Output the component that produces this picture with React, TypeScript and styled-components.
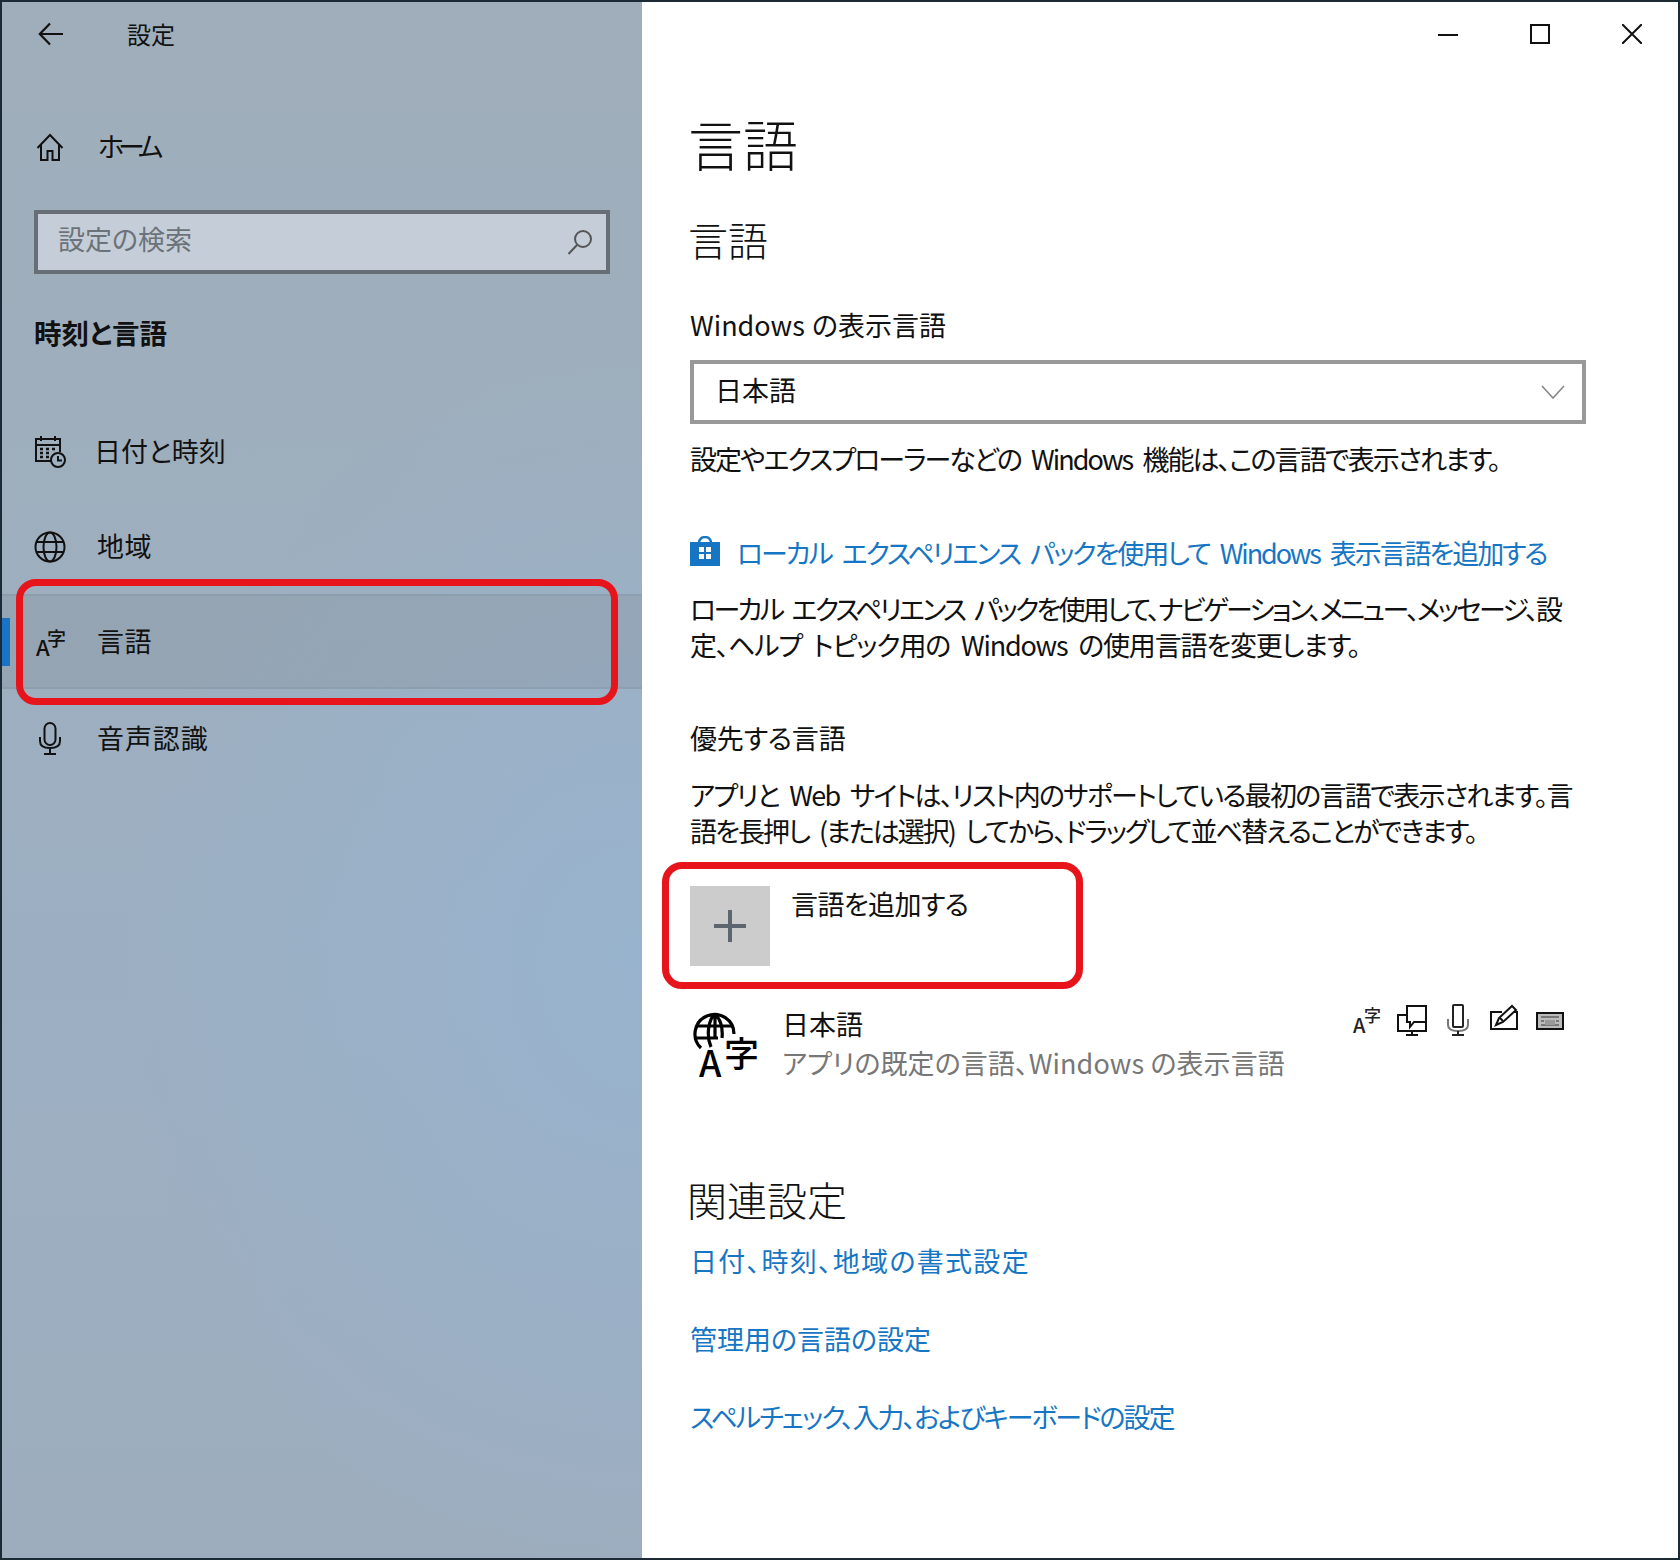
import styled, { createGlobalStyle } from "styled-components";

const GlobalStyle = createGlobalStyle`
  html, body {
    margin: 0;
    padding: 0;
    background: #fff;
  }
  * {
    box-sizing: border-box;
  }
`;

const Window = styled.div`
  width: 1680px;
  height: 1560px;
  border: 2px solid #1c2a36;
  display: flex;
  font-family: "Noto Sans CJK JP", "Noto Sans", sans-serif;
  font-size: 27px;
  line-height: 36px;
  color: #111;
  overflow: hidden;
`;

const Sidebar = styled.aside`
  width: 640px;
  flex-shrink: 0;
  display: flex;
  flex-direction: column;
  background:
    radial-gradient(ellipse 520px 620px at 100% 62%, rgba(150, 182, 214, 0.6), rgba(150, 182, 214, 0) 100%),
    linear-gradient(180deg, #a0aebb 0%, #9eaebc 25%, #9cafc2 60%, #9dadbe 100%);
`;

const TitleBar = styled.div`
  height: 64px;
  display: flex;
  align-items: center;
  padding-left: 36px;
  gap: 63px;
  font-size: 24px;
  font-feature-settings: "palt";
`;

const NavRow = styled.div<{ $active?: boolean }>`
  position: relative;
  height: 95px;
  display: flex;
  align-items: center;
  gap: 31px;
  padding-left: 32px;
  background: ${(p) => (p.$active ? "rgba(100, 100, 100, 0.13)" : "transparent")};
  box-shadow: ${(p) =>
    p.$active ? "inset 0 2px 0 rgba(90,100,105,.1), inset 0 -2px 0 rgba(90,100,105,.1)" : "none"};
`;

const HomeRow = styled(NavRow)`
  margin-top: 33px;
`;

const SpeechRow = styled(NavRow)`
  margin-top: 2px;
`;

const NavLabel = styled.span<{ $ls?: number; $nudge?: number }>`
  padding-bottom: 2px;
  margin-left: ${(p) => p.$nudge ?? 0}px;
  font-feature-settings: "palt";
  letter-spacing: ${(p) => p.$ls ?? 0.4}px;
`;

const NavIcon = styled.span`
  width: 32px;
  height: 34px;
  display: flex;
  align-items: center;
  justify-content: center;
`;

const NavList = styled.nav`
  margin-top: 52px;
  display: flex;
  flex-direction: column;
`;

const ActiveBar = styled.span`
  position: absolute;
  left: 0;
  top: 24px;
  width: 8px;
  height: 48px;
  background: #1a74c6;
`;

const SearchBox = styled.div`
  margin: 16px 0 0 32px;
  width: 576px;
  height: 64px;
  border: 4px solid #676e76;
  background: #c5ced8;
  display: flex;
  align-items: center;
  justify-content: space-between;
  padding: 0 13px 0 20px;
  color: #6c7279;
`;

const SearchLabel = styled.span`
  padding-bottom: 7px;
  font-feature-settings: "palt";
`;

const SectionTitle = styled.h2`
  margin: 38px 0 0 32px;
  font-size: 27.5px;
  line-height: 40px;
  font-weight: 700;
  font-feature-settings: "palt";
`;

const Highlight = styled.div<{ $left: number; $top: number; $w: number; $h: number }>`
  position: absolute;
  left: ${(p) => p.$left}px;
  top: ${(p) => p.$top}px;
  width: ${(p) => p.$w}px;
  height: ${(p) => p.$h}px;
  border: 7.5px solid #e8141c;
  border-radius: 20px;
  pointer-events: none;
`;

const Main = styled.main`
  flex: 1;
  background: #fff;
  padding-left: 48px;
  display: flex;
  flex-direction: column;
  align-items: flex-start;
`;

const Controls = styled.div`
  align-self: stretch;
  height: 64px;
  margin-left: -48px;
  display: flex;
  align-items: center;
  justify-content: flex-end;
  gap: 72px;
  padding-right: 36px;
`;

const PageTitle = styled.h1`
  margin: 41px 0 0 -2px;
  font-size: 55px;
  line-height: 70px;
  font-weight: 300;
`;

const Subtitle = styled.h2<{ $top: number; $left?: number }>`
  margin: ${(p) => p.$top}px 0 0 ${(p) => p.$left ?? -2}px;
  font-size: 40px;
  line-height: 50px;
  font-weight: 300;
`;

const Text = styled.p<{ $top: number; $ls?: number; $ws?: number }>`
  margin: ${(p) => p.$top}px 0 0;
  width: 896px;
  font-feature-settings: "palt";
  letter-spacing: ${(p) => p.$ls ?? 0}px;
  word-spacing: ${(p) => p.$ws ?? 6}px;
  white-space: nowrap;
`;

const TextLine = styled.span<{ $ls: number }>`
  display: block;
  letter-spacing: ${(p) => p.$ls}px;
`;

const Select = styled.div`
  margin-top: 17px;
  width: 896px;
  height: 64px;
  border: 4px solid #999;
  display: flex;
  align-items: center;
  justify-content: space-between;
  padding: 0 17px 0 21px;
`;

const SelectValue = styled.span`
  padding-bottom: 4px;
`;

const StoreLink = styled.a`
  margin-top: 58px;
  display: flex;
  align-items: center;
  gap: 17px;
  color: #1776c3;
  font-feature-settings: "palt";
  letter-spacing: -2.1px;
  word-spacing: 6px;
  svg {
    margin-bottom: 5px;
  }
`;

const RelatedLink = styled.a<{ $top: number; $ls?: number }>`
  display: block;
  margin-top: ${(p) => p.$top}px;
  color: #1776c3;
  font-feature-settings: "palt";
  letter-spacing: ${(p) => p.$ls ?? 0}px;
`;

const AddRow = styled.div`
  position: relative;
  margin-top: 37px;
  display: flex;
  gap: 21px;
`;

const AddTile = styled.div`
  width: 80px;
  height: 80px;
  background: #ccc;
  display: flex;
  align-items: center;
  justify-content: center;
`;

const AddLabel = styled.span`
  font-feature-settings: "palt";
  letter-spacing: -0.6px;
`;

const LanguageRow = styled.div`
  margin-top: 40px;
  width: 896px;
  display: flex;
`;

const LanguageIcon = styled.div`
  width: 92px;
  flex-shrink: 0;
  padding: 6px 0 0 4px;
`;

const LanguageText = styled.div`
  flex: 1;
  display: flex;
  flex-direction: column;
  gap: 3px;
`;

const LanguageHint = styled.span`
  color: #777;
  font-feature-settings: "palt";
  letter-spacing: 0.1px;
`;

const FeatureIcons = styled.div`
  display: flex;
  gap: 14px;
  margin: -2px 20px 0 0;
  height: 32px;
`;

const BackIcon = () => (
  <svg width="26" height="24" viewBox="0 0 26 24" fill="none" stroke="#111" strokeWidth="2.2">
    <path d="M25 12H2M12 1.5 1.8 12 12 22.5" />
  </svg>
);

const HomeIcon = () => (
  <svg width="28" height="28" viewBox="0 0 28 28" fill="none" stroke="#111" strokeWidth="2">
    <path d="M1.5 15 14 2l12.5 13M5 12v15h6.5v-9h5v9H23V12" />
  </svg>
);

const SearchIcon = () => (
  <svg width="26" height="26" viewBox="0 0 26 26" fill="none" stroke="#555" strokeWidth="2">
    <circle cx="16" cy="10" r="8" />
    <path d="M10 16 1.5 25" />
  </svg>
);

const CalendarIcon = () => (
  <svg width="32" height="34" viewBox="0 0 32 34" fill="none" stroke="#111" strokeWidth="2">
    <path d="M19 26H2V4h24v13M2 10h24M7 1v5M21 1v5" />
    <path d="M6 14h3M12 14h3M18 14h3M6 18h3M12 18h3M6 22h3M12 22h3" strokeWidth="2.4" />
    <circle cx="24" cy="25" r="7" fill="#9fb1c3" />
    <path d="M24 21v4.5h4" />
  </svg>
);

const GlobeIcon = () => (
  <svg width="32" height="32" viewBox="0 0 32 32" fill="none" stroke="#111" strokeWidth="2">
    <circle cx="16" cy="16" r="14.5" />
    <ellipse cx="16" cy="16" rx="6.5" ry="14.5" />
    <path d="M2.5 11h27M2.5 21h27" />
  </svg>
);

const GlyphSvg = styled.svg`
  overflow: visible;
  font-family: "Noto Sans CJK JP", sans-serif;
`;

const LanguageGlyph = () => (
  <GlyphSvg width="32" height="34" viewBox="0 0 32 34" fill="#111">
    <text x="2" y="31" fontSize="22" fontWeight="500">A</text>
    <text x="13" y="21" fontSize="19" fontWeight="500">字</text>
  </GlyphSvg>
);

const MicIcon = () => (
  <svg width="24" height="33" viewBox="0 0 24 33" fill="none" stroke="#111" strokeWidth="2">
    <rect x="6.5" y="1" width="11" height="22" rx="5.5" />
    <path d="M2 15v4c0 5 4 7 10 7s10-2 10-7v-4M12 26v6M6 32h12" />
  </svg>
);

const StoreIcon = () => (
  <svg width="30" height="30" viewBox="0 0 30 30">
    <path d="M9 7c0-8 12-8 12 0" fill="none" stroke="#1776c3" strokeWidth="2.4" />
    <rect y="6" width="30" height="24" fill="#1776c3" />
    <path d="M9 11h5v5H9zM16 11h5v5h-5zM9 18h5v5H9zM16 18h5v5h-5z" fill="#fff" />
  </svg>
);

const MinimizeIcon = () => (
  <svg width="20" height="20" viewBox="0 0 20 20" stroke="#111" strokeWidth="2">
    <path d="M0 11h20" />
  </svg>
);

const MaximizeIcon = () => (
  <svg width="20" height="20" viewBox="0 0 20 20" fill="none" stroke="#111" strokeWidth="2">
    <rect x="1" y="1" width="18" height="18" />
  </svg>
);

const CloseIcon = () => (
  <svg width="20" height="20" viewBox="0 0 20 20" stroke="#111" strokeWidth="2">
    <path d="m0 0 20 20M20 0 0 20" />
  </svg>
);

const ChevronIcon = () => (
  <svg width="24" height="14" viewBox="0 0 24 14" fill="none" stroke="#888" strokeWidth="1.6">
    <path d="M1 1 12 13 23 1" />
  </svg>
);

const PlusIcon = () => (
  <svg width="32" height="32" viewBox="0 0 32 32" stroke="#5d666e" strokeWidth="4">
    <path d="M0 16h32M16 0v32" />
  </svg>
);

const BigLanguageIcon = () => (
  <GlyphSvg width="68" height="66" viewBox="0 0 68 66" fill="#000">
    <g fill="none" stroke="#000" strokeWidth="3.2">
      <path d="M7 36A19.5 19.5 0 1 1 40 22" />
      <path d="M20 2c-7 10-7 24-3 33M21 2c6 6 8 14 7 24M3 14h36M2 26h22M21 2v24" />
    </g>
    <text x="5" y="65" fontSize="36" fontWeight="500">A</text>
    <text x="30" y="55" fontSize="35" fontWeight="500">字</text>
  </GlyphSvg>
);

const FeatureLanguage = () => (
  <GlyphSvg width="32" height="32" viewBox="0 0 32 32" fill="#222">
    <text x="3" y="29" fontSize="20" fontWeight="500">A</text>
    <text x="14" y="18" fontSize="17" fontWeight="500">字</text>
  </GlyphSvg>
);

const FeatureDisplay = () => (
  <svg width="32" height="32" viewBox="0 0 32 32" fill="none" stroke="#111" strokeWidth="2">
    <path d="M11 11H2v16h28v-9M10 31h12M16 27v4" />
    <path d="M11 2h19v16H18l-4 5v-5h-3z" fill="#fff" />
  </svg>
);

const FeatureMic = () => (
  <svg width="32" height="32" viewBox="0 0 32 32" fill="none" stroke="#222" strokeWidth="2">
    <rect x="11" y="1" width="10" height="22" rx="1" />
    <path d="M6 15v6c0 4 4 6 10 6s10-2 10-6v-6" stroke="#777" />
    <path d="M16 27v3M10 31h12" />
  </svg>
);

const FeaturePen = () => (
  <svg width="32" height="32" viewBox="0 0 32 32" fill="none" stroke="#111" strokeWidth="2">
    <path d="M14 8H3v17h26V8h-3" />
    <path d="m8 21 3-7L24 2l4 4-13 12z" fill="#fff" />
    <path d="M12 14l3 3" />
  </svg>
);

const FeatureKeyboard = () => (
  <svg width="32" height="32" viewBox="0 0 32 32" fill="none">
    <rect x="3" y="9" width="26" height="16" stroke="#111" strokeWidth="2" fill="#bbb" />
    <path d="M7 13h18M7 17h3M22 17h3M7 21h18" stroke="#777" strokeWidth="2" />
    <path d="M11 16h10v5H11z" fill="#999" />
  </svg>
);

export default function App() {
  return (
    <>
      <GlobalStyle />
      <Window>
        <Sidebar>
          <TitleBar>
            <BackIcon />
            <span>設定</span>
          </TitleBar>
          <HomeRow>
            <NavIcon>
              <HomeIcon />
            </NavIcon>
            <NavLabel $ls={-6} $nudge={1}>ホーム</NavLabel>
          </HomeRow>
          <SearchBox>
            <SearchLabel>設定の検索</SearchLabel>
            <SearchIcon />
          </SearchBox>
          <SectionTitle>時刻と言語</SectionTitle>
          <NavList>
            <NavRow>
              <NavIcon>
                <CalendarIcon />
              </NavIcon>
              <NavLabel $ls={0} $nudge={-3}>日付と時刻</NavLabel>
            </NavRow>
            <NavRow>
              <NavIcon>
                <GlobeIcon />
              </NavIcon>
              <NavLabel>地域</NavLabel>
            </NavRow>
            <NavRow $active>
              <ActiveBar />
              <NavIcon>
                <LanguageGlyph />
              </NavIcon>
              <NavLabel>言語</NavLabel>
              <Highlight $left={14} $top={-15} $w={602} $h={126} />
            </NavRow>
            <SpeechRow>
              <NavIcon>
                <MicIcon />
              </NavIcon>
              <NavLabel $ls={0.9}>音声認識</NavLabel>
            </SpeechRow>
          </NavList>
        </Sidebar>
        <Main>
          <Controls>
            <MinimizeIcon />
            <MaximizeIcon />
            <CloseIcon />
          </Controls>
          <PageTitle>言語</PageTitle>
          <Subtitle $top={37}>言語</Subtitle>
          <Text $top={43} $ws={1}>Windows の表示言語</Text>
          <Select>
            <SelectValue>日本語</SelectValue>
            <ChevronIcon />
          </Select>
          <Text $top={17} $ls={-1.95}>
            設定やエクスプローラーなどの Windows 機能は、この言語で表示されます。
          </Text>
          <StoreLink>
            <StoreIcon />
            <span>ローカル エクスペリエンス パックを使用して Windows 表示言語を追加する</span>
          </StoreLink>
          <Text $top={20}>
            <TextLine $ls={-2.75}>
              ローカル エクスペリエンス パックを使用して、ナビゲーション、メニュー、メッセージ、設
            </TextLine>
            <TextLine $ls={-1.2}>定、ヘルプ トピック用の Windows の使用言語を変更します。</TextLine>
          </Text>
          <Text $top={57} $ls={-0.2}>優先する言語</Text>
          <Text $top={21}>
            <TextLine $ls={-1.73}>
              アプリと Web サイトは、リスト内のサポートしている最初の言語で表示されます。言
            </TextLine>
            <TextLine $ls={-1.98}>語を長押し (または選択) してから、ドラッグして並べ替えることができます。</TextLine>
          </Text>
          <AddRow>
            <AddTile>
              <PlusIcon />
            </AddTile>
            <AddLabel>言語を追加する</AddLabel>
            <Highlight $left={-28} $top={-24} $w={421} $h={127} />
          </AddRow>
          <LanguageRow>
            <LanguageIcon>
              <BigLanguageIcon />
            </LanguageIcon>
            <LanguageText>
              <span>日本語</span>
              <LanguageHint>アプリの既定の言語、Windows の表示言語</LanguageHint>
            </LanguageText>
            <FeatureIcons>
              <FeatureLanguage />
              <FeatureDisplay />
              <FeatureMic />
              <FeaturePen />
              <FeatureKeyboard />
            </FeatureIcons>
          </LanguageRow>
          <Subtitle $top={89} $left={-3}>関連設定</Subtitle>
          <RelatedLink $top={19} $ls={1.3}>日付、時刻、地域の書式設定</RelatedLink>
          <RelatedLink $top={42}>管理用の言語の設定</RelatedLink>
          <RelatedLink $top={42} $ls={-2}>スペルチェック、入力、およびキーボードの設定</RelatedLink>
        </Main>
      </Window>
    </>
  );
}
